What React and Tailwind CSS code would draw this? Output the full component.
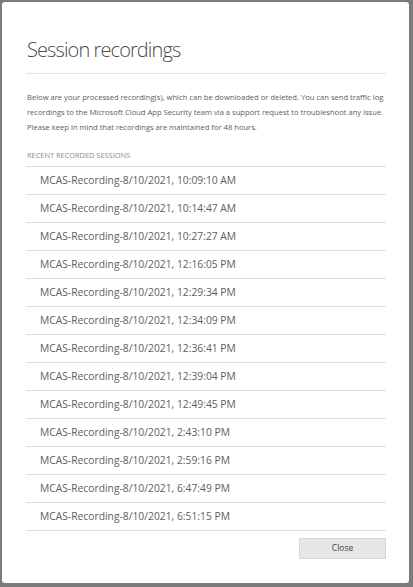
import React from 'react'

const recordings = [
  '10:09:10 AM',
  '10:14:47 AM',
  '10:27:27 AM',
  '12:16:05 PM',
  '12:29:34 PM',
  '12:34:09 PM',
  '12:36:41 PM',
  '12:39:04 PM',
  '12:49:45 PM',
  '2:43:10 PM',
  '2:59:16 PM',
  '6:47:49 PM',
  '6:51:15 PM',
]

export default function App() {
  return (
    <div className="w-[413px] h-[587px] bg-[#7b7b7b] pt-[2px] pl-[2px] pr-[4px] pb-[4px] font-['Open_Sans',sans-serif]">
      <div className="h-full bg-white rounded-[3px] pl-[24px] pr-[23px] pt-[34px] flex flex-col">
        <h1 className="text-[20px] leading-[28px] font-light text-[#4a4a4a] pl-[1px] tracking-[-0.9px]">
          Session recordings
        </h1>
        <div className="mt-[9px] border-b border-[#e3e3e3]" />
        <div className="mt-[16px] pl-[1px] text-[7.6px] leading-[15px] text-[#5c5c5c]">
          <p>Below are your processed recording(s), which can be downloaded or deleted. You can send traffic log</p>
          <p>recordings to the Microsoft Cloud App Security team via a support request to troubleshoot any issue.</p>
          <p>Please keep in mind that recordings are maintained for 48 hours.</p>
        </div>
        <div className="mt-[14px] pl-[1px] text-[7.4px] leading-[12px] text-[#8a8a8a] uppercase">
          Recent recorded sessions
        </div>
        <ul className="mt-[5px] border-t border-[#dcdcdc]">
          {recordings.map((t) => (
            <li
              key={t}
              className="h-[28px] border-b border-[#dcdcdc] pl-[14px] flex items-center text-[10.3px] text-[#5e5e5e]"
            >
              MCAS-Recording-8/10/2021, {t}
            </li>
          ))}
        </ul>
        <div className="mt-[7px] flex justify-end">
          <button className="w-[87px] h-[21px] bg-[#e6e6e6] border border-[#d6d6d6] text-[8.5px] text-[#444]">
            Close
          </button>
        </div>
      </div>
    </div>
  )
}
